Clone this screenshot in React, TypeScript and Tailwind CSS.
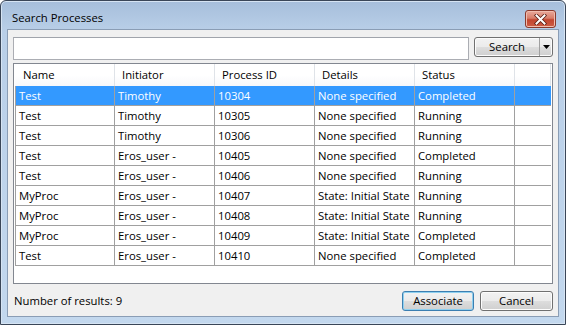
import React from "react";

const rows = [
  ["Test", "Timothy", "10304", "None specified", "Completed"],
  ["Test", "Timothy", "10305", "None specified", "Running"],
  ["Test", "Timothy", "10306", "None specified", "Running"],
  ["Test", "Eros_user -", "10405", "None specified", "Completed"],
  ["Test", "Eros_user -", "10406", "None specified", "Running"],
  ["MyProc", "Eros_user -", "10407", "State: Initial State", "Running"],
  ["MyProc", "Eros_user -", "10408", "State: Initial State", "Running"],
  ["MyProc", "Eros_user -", "10409", "State: Initial State", "Completed"],
  ["Test", "Eros_user -", "10410", "None specified", "Completed"],
];

const headers = ["Name", "Initiator", "Process ID", "Details", "Status"];

const btn =
  "border border-[#707070] rounded-[3px] bg-[linear-gradient(to_bottom,#f2f2f2_0%,#ebebeb_50%,#dddddd_51%,#cfcfcf_100%)] shadow-[inset_0_0_0_1px_#fcfcfc]";

export default function App() {
  return (
    <div
      className="w-[566px] h-[325px] bg-white text-black text-[11.3px] leading-none"
      style={{ fontFamily: '"Open Sans", "Noto Sans", sans-serif' }}
    >
      <div className="w-[566px] h-[325px] flex flex-col border border-[#3a4658] rounded-t-[6px] overflow-hidden bg-[linear-gradient(to_bottom,#a6bedb_0px,#b9cfe8_30px,#c3d8ee_100%)] shadow-[inset_0_0_0_1px_#d6e4f3]">
        {/* Title bar */}
        <div className="h-[28px] flex items-start pl-[11px] pr-[9px] shrink-0">
          <span className="mt-[11px] text-[11.3px] text-black">Search Processes</span>
          <div className="ml-auto mt-[9px] w-[31px] h-[18px] rounded-[3px] border border-[#8a3a2d] bg-[linear-gradient(to_bottom,#e9a99b_0%,#d77d69_45%,#c2452f_55%,#cd5d45_100%)] shadow-[inset_0_0_0_1px_#f0bcae] flex items-center justify-center">
            <svg width="13" height="11" viewBox="0 0 13 11">
              <path d="M2.5 1.5 L10.5 9.5 M10.5 1.5 L2.5 9.5" stroke="#5a1e14" strokeWidth="3.6" strokeLinecap="square" />
              <path d="M2.5 1.5 L10.5 9.5 M10.5 1.5 L2.5 9.5" stroke="#ffffff" strokeWidth="2" strokeLinecap="square" />
            </svg>
          </div>
        </div>

        {/* Client */}
        <div className="mx-[6px] mb-[7px] flex-1 border border-[#8a9db5] bg-[#f0f0f0] flex flex-col px-[5px] pt-[7px]">
          {/* Search row */}
          <div className="flex items-start gap-[5px]">
            <div className="w-[456px] h-[23px] bg-white border border-[#abadb3] border-t-[#a0a4ab]" />
            <div className={`h-[20px] w-[79px] flex ${btn}`}>
              <div className="w-[65px] flex items-center justify-center border-r border-[#a0a0a0]">
                Search
              </div>
              <div className="flex-1 flex items-center justify-center">
                <svg width="7" height="4" viewBox="0 0 7 4">
                  <path d="M0 0 H7 L3.5 4 Z" fill="#000" />
                </svg>
              </div>
            </div>
          </div>

          {/* Table */}
          <div className="mt-[3px] h-[221px] bg-white border border-[#828790] pl-[1px] pr-[1px] flex flex-col">
            <div className="h-[22px] flex shrink-0 bg-[linear-gradient(to_bottom,#ffffff_0%,#ffffff_50%,#f7f8fa_100%)]">
              {headers.map((h, i) => (
                <div
                  key={h}
                  className={`w-[100px] shrink-0 flex items-center border-r border-[#dfe3e8] ${i === 0 ? "pl-[8px] w-[100px]" : "pl-[7px]"}`}
                >
                  {h}
                </div>
              ))}
              <div className="flex-1 border-r border-[#dfe3e8]" />
            </div>
            {rows.map((r, ri) => {
              const sel = ri === 0;
              return (
                <div
                  key={ri}
                  className={`h-[20px] flex shrink-0 border-b border-[#a0a0a0] ${sel ? "bg-[#3399ff] text-white" : ""}`}
                >
                  {r.map((c, ci) => (
                    <div
                      key={ci}
                      className={`shrink-0 flex items-center pl-[3px] border-r border-[#a0a0a0] ${ci === 0 ? "w-[100px] border-l pl-[2px]" : "w-[100px]"}`}
                    >
                      {c}
                    </div>
                  ))}
                  <div className="flex-1" />
                </div>
              );
            })}
          </div>

          {/* Bottom row */}
          <div className="mt-[7px] h-[20px] flex items-center">
            <span className="pl-[1px]">Number of results: 9</span>
            <div className="ml-auto flex gap-[6px]">
              <div
                className="w-[72px] h-[20px] flex items-center justify-center rounded-[3px] border border-[#3c7fb1] bg-[linear-gradient(to_bottom,#f2f2f2_0%,#ebebeb_50%,#dddddd_51%,#cfcfcf_100%)] shadow-[inset_0_0_0_1px_#8fd0ef]"
              >
                Associate
              </div>
              <div className={`w-[73px] h-[20px] flex items-center justify-center ${btn}`}>Cancel</div>
            </div>
          </div>
        </div>
      </div>
    </div>
  );
}
